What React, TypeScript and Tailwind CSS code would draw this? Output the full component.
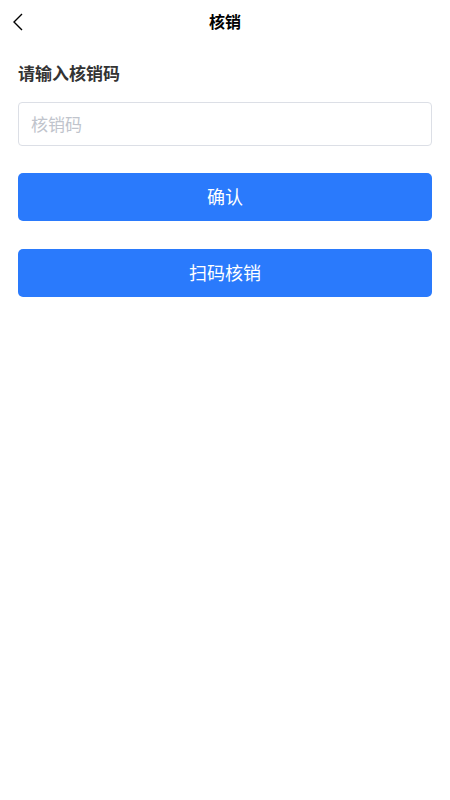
import { useState } from 'react'

export default function App() {
  const [code, setCode] = useState('')

  return (
    <div
      className="min-h-[800px] w-full bg-white"
      style={{ fontFamily: '"Noto Sans", "Noto Sans CJK SC", sans-serif' }}
    >
      {/* Nav bar */}
      <div className="relative flex h-11 items-center justify-center">
        <button className="absolute left-[11px] top-[12px] text-black">
          <svg width="14" height="20" viewBox="0 0 14 20" fill="none">
            <path d="M11 2 L3 10 L11 18" stroke="currentColor" strokeWidth="1.4" />
          </svg>
        </button>
        <h1 className="text-[16px] font-bold text-black">核销</h1>
      </div>

      <div className="px-[18px]">
        <div className="pt-[18px] text-[17px] leading-6 font-bold text-[#333]">请输入核销码</div>

        <input
          value={code}
          onChange={(e) => setCode(e.target.value)}
          placeholder="核销码"
          className="mt-4 block h-11 w-full rounded-[4px] border border-[#dcdfe6] px-3 text-[17px] text-[#333] placeholder-[#c0c4cc] outline-none"
        />

        <button className="mt-[27px] flex h-12 w-full items-center justify-center rounded-[5px] bg-[#2a7afc] text-[18px] text-white">
          确认
        </button>

        <button className="mt-7 flex h-12 w-full items-center justify-center rounded-[5px] bg-[#2a7afc] text-[18px] text-white">
          扫码核销
        </button>
      </div>
    </div>
  )
}
